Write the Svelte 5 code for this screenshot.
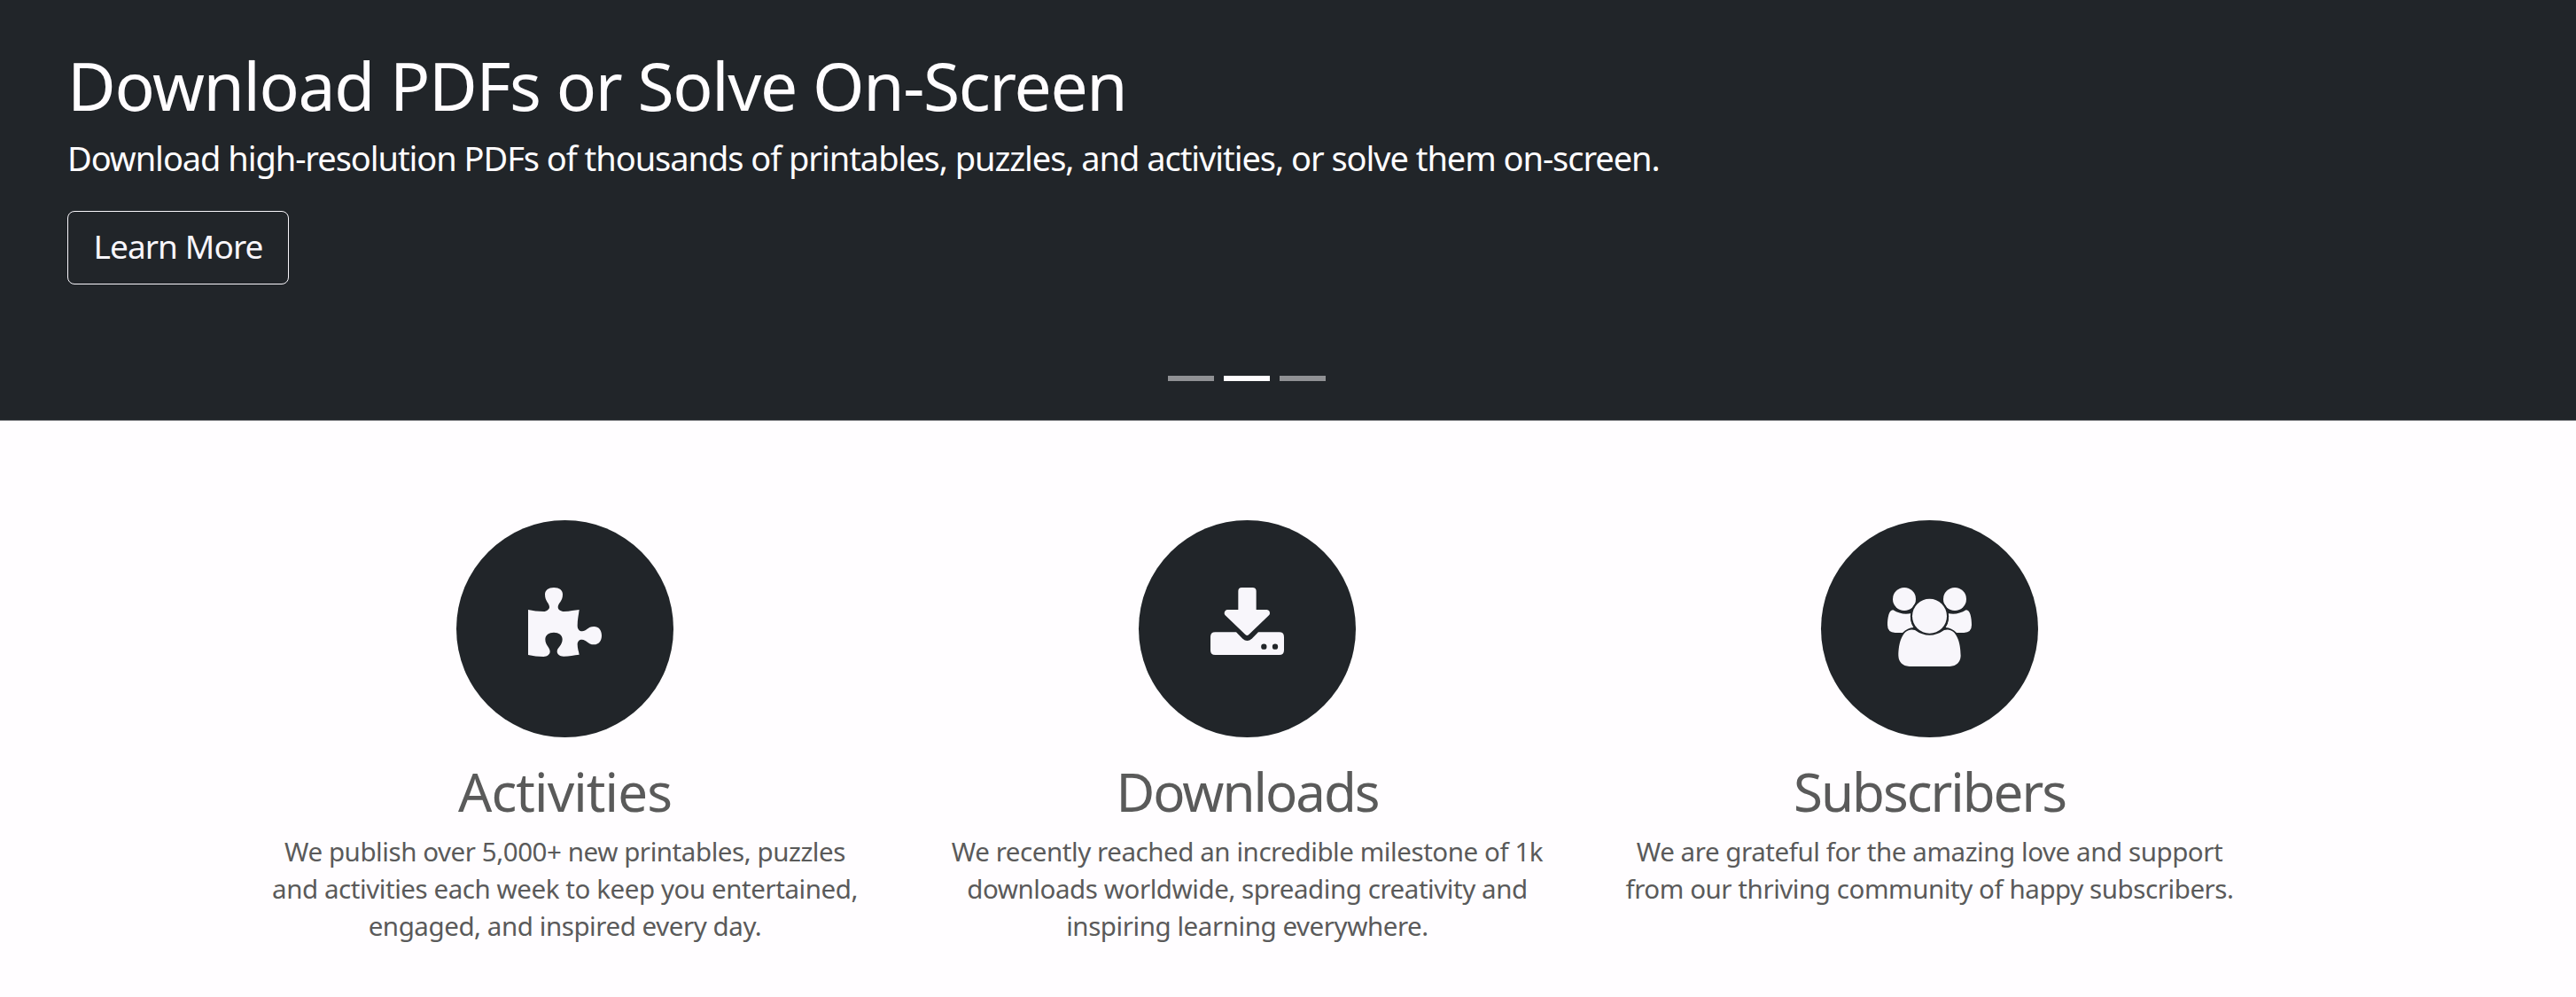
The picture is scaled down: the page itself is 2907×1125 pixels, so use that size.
<script>
    const slides = [0, 1, 2];
    let active = 1;

    const features = [
        {
            icon: 'puzzle',
            title: 'Activities',
            lines: [
                'We publish over 5,000+ new printables, puzzles',
                'and activities each week to keep you entertained,',
                'engaged, and inspired every day.'
            ]
        },
        {
            icon: 'download',
            title: 'Downloads',
            lines: [
                'We recently reached an incredible milestone of 1k',
                'downloads worldwide, spreading creativity and',
                'inspiring learning everywhere.'
            ]
        },
        {
            icon: 'people',
            title: 'Subscribers',
            lines: [
                'We are grateful for the amazing love and support',
                'from our thriving community of happy subscribers.'
            ]
        }
    ];
</script>

<style>
    :global(body) {
        margin: 0;
        background: #fffdff;
        font-family: "Segoe UI", "Noto Sans", "Open Sans", sans-serif;
    }

    .page {
        height: 1125px;
        overflow: hidden;
        color: #5a5a5a;
    }

    .hero {
        box-sizing: border-box;
        display: flex;
        flex-direction: column;
        align-items: flex-start;
        height: 475px;
        padding: 51px 92px 44px 76px;
        background: #212529;
        border-bottom: 1px solid #909094;
        color: #fffdff;
    }

    h1, h2, p {
        margin: 0;
        font-weight: 400;
        white-space: nowrap;
    }

    h1 {
        font-size: 75px;
        line-height: 90px;
        letter-spacing: -1.37px;
    }

    .lead {
        margin-top: 9px;
        font-size: 38px;
        line-height: 57px;
        letter-spacing: -1.05px;
    }

    .learn {
        box-sizing: border-box;
        width: 250px;
        height: 83px;
        margin-top: 31px;
        padding: 0 0 5px;
        background: transparent;
        border: 1px solid #f8f6fb;
        border-radius: 8px;
        color: #f8f6fb;
        font-family: inherit;
        font-size: 37px;
        letter-spacing: -0.9px;
    }

    .indicators {
        display: flex;
        justify-content: center;
        gap: 11px;
        width: 2662px;
        margin-top: auto;
    }

    .indicators button {
        width: 52px;
        height: 6px;
        padding: 0;
        border: 0;
        background: #fffdff;
        opacity: 0.5;
    }

    .indicators .active {
        opacity: 1;
    }

    .features {
        display: grid;
        grid-template-columns: repeat(3, 770px);
        justify-content: center;
        width: 2815px;
        padding-top: 112px;
        text-align: center;
    }

    .icon {
        display: block;
        width: 245px;
        height: 245px;
        margin: 0 auto 25px;
        background: #212529;
        border-radius: 50%;
        fill: #f8f6fb;
    }

    .icon .cut {
        fill: #212529;
    }

    h2 {
        margin-bottom: 11px;
        font-size: 60px;
        line-height: 72px;
        letter-spacing: -2px;
    }

    .puzzle h2 {
        letter-spacing: -0.9px;
    }

    .feature p {
        font-size: 29.5px;
        line-height: 42px;
        letter-spacing: -0.43px;
    }

    .feature span {
        display: block;
    }
</style>

<div class="page">
    <section class="hero">
        <h1>Download PDFs or Solve On-Screen</h1>
        <p class="lead">Download high-resolution PDFs of thousands of printables, puzzles, and activities, or solve them on-screen.</p>
        <button class="learn">Learn More</button>
        <div class="indicators">
            {#each slides as slide}
                <button
                    class:active={slide === active}
                    aria-label="Slide {slide + 1}"
                    on:click={() => { active = slide; }}
                ></button>
            {/each}
        </div>
    </section>

    <section class="features">
        {#each features as feature}
            <div class="feature" class:puzzle={feature.icon === 'puzzle'}>
                <svg class="icon" viewBox="45 51 735 735">
                    {#if feature.icon === 'puzzle'}
                        <path d="M288 354 Q312 360 340 360 C352 360 360 352 360 345 C360 331 345 326 345 302 C345 288 357 279 375 279 C394 279 405 288 405 302 C405 326 389 331 389 345 C389 353 397 360 410 360 C430 360 445 355 461 354 C459 371 455 387 455 408 C455 420 462 427 471 427 C485 427 489 411 511 411 C527 411 537 423 537 441 C537 460 527 472 511 472 C489 472 486 455 470 455 C461 455 455 461 455 472 C455 485 459 495 461 506 C443 508 427 512 408 512 C395 512 386 505 386 496 C386 482 404 476 404 454 C404 440 392 431 375 431 C358 431 346 440 346 454 C346 476 362 481 362 496 C362 505 353 513 340 513 C321 513 305 510 288 507 Z" />
                    {:else if feature.icon === 'download'}
                        <path d="M394 279 H430 Q443 279 443 291 V354 H479 Q489 356 489 366 Q489 370 486 373 L418 438 Q412 444 406 438 L338 373 Q335 370 335 366 Q336 355 346 354 H382 V291 Q382 279 394 279 Z" />
                        <path d="M304 430 H375 L397 452 Q412 466 428 452 L450 430 H521 Q537 430 537 446 V491 Q537 507 521 507 H304 Q288 507 288 491 V446 Q288 430 304 430 Z" />
                        <circle class="cut" cx="469" cy="479" r="9.5" />
                        <circle class="cut" cx="507" cy="479" r="9.5" />
                    {:else}
                        <circle cx="327" cy="318" r="39" />
                        <circle cx="498" cy="318" r="39" />
                        <path d="M289 355 Q320 374 351 366 Q343 391 358 414 Q338 415 321 432 H296 Q270 431 270 406 C270 382 275 354 289 355 Z" />
                        <path d="M536 355 Q505 374 474 366 Q482 391 467 414 Q487 415 504 432 H529 Q555 431 555 406 C555 382 550 354 536 355 Z" />
                        <circle class="cut" cx="412.500" cy="376" r="65" />
                        <circle cx="412.500" cy="376" r="58.500" />
                        <path d="M363 423 Q412 458 462 423 C501 412 518 460 518 510 Q516 543 481 546 H344 Q309 543 307 510 C307 460 324 412 363 423 Z" />
                    {/if}
                </svg>
                <h2>{feature.title}</h2>
                <p>
                    {#each feature.lines as line}
                        <span>{line}</span>
                    {/each}
                </p>
            </div>
        {/each}
    </section>
</div>
